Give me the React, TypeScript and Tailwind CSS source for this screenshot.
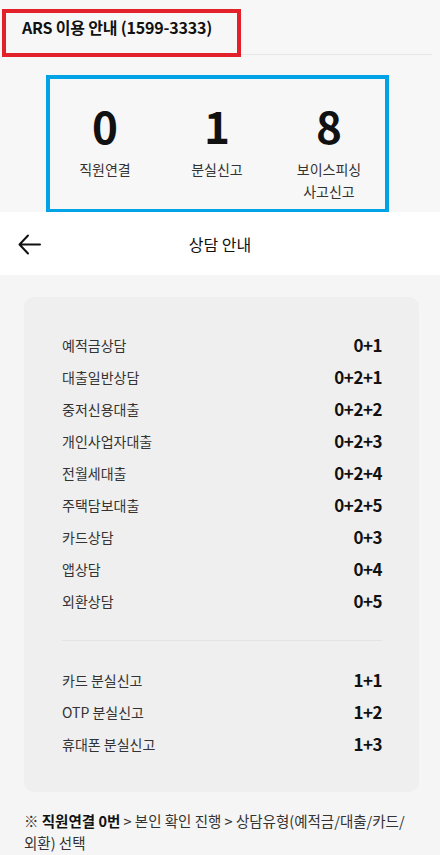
const consultRows = [
  { label: "예적금상담", code: "0+1" },
  { label: "대출일반상담", code: "0+2+1" },
  { label: "중저신용대출", code: "0+2+2" },
  { label: "개인사업자대출", code: "0+2+3" },
  { label: "전월세대출", code: "0+2+4" },
  { label: "주택담보대출", code: "0+2+5" },
  { label: "카드상담", code: "0+3" },
  { label: "앱상담", code: "0+4" },
  { label: "외환상담", code: "0+5" },
];

const lossRows = [
  { label: "카드 분실신고", code: "1+1" },
  { label: "OTP 분실신고", code: "1+2" },
  { label: "휴대폰 분실신고", code: "1+3" },
];

const shortcuts = [
  { num: "0", label: ["직원연결"] },
  { num: "1", label: ["분실신고"] },
  { num: "8", label: ["보이스피싱", "사고신고"] },
];

const Row = ({ label, code }: { label: string; code: string }) => (
  <div className="flex h-8 items-center justify-between">
    <span className="text-[14px] text-[#333]">{label}</span>
    <span className="text-[17px] font-bold tracking-[-0.5px] text-[#111]">{code}</span>
  </div>
);

export default function App() {
  return (
    <div
      className="w-[440px] min-h-[855px] bg-[#f5f5f5] text-[#222]"
      style={{ fontFamily: '"Noto Sans CJK KR", "Noto Sans", sans-serif' }}
    >
      {/* ARS summary */}
      <div className="relative h-[212px] bg-[#f7f7f7]">
        <div className="mx-2 flex h-[55px] items-center border-b border-[#e6e6e6] pl-[14px]">
          <h1 className="text-[16px] font-bold tracking-[-0.2px] text-[#111]">ARS 이용 안내 (1599-3333)</h1>
        </div>
        <div className="mx-auto mt-[45px] grid w-[336px] grid-cols-3 -translate-x-[3px]">
          {shortcuts.map((s) => (
            <div key={s.num} className="flex flex-col items-center">
              <span className="text-[44px] font-bold leading-[50px] text-[#111]">{s.num}</span>
              <div className="mt-[8px] flex flex-col items-center text-[14px] leading-[22px] text-[#333]">
                {s.label.map((l) => (
                  <span key={l}>{l}</span>
                ))}
              </div>
            </div>
          ))}
        </div>

        {/* annotation boxes */}
        <div className="absolute left-[2px] top-[9px] h-[48px] w-[239px] border-4 border-[#e3212b]" />
        <div className="absolute left-[46px] top-[75px] h-[138px] w-[343px] border-4 border-[#00a3e6]" />
      </div>

      {/* Sub header */}
      <div className="relative flex h-[63px] items-center justify-center bg-white">
        <svg
          className="absolute left-[18px] top-[22px]"
          width="23"
          height="21"
          viewBox="0 0 23 21"
          fill="none"
          stroke="#111"
          strokeWidth="2"
          strokeLinecap="round"
          strokeLinejoin="round"
        >
          <path d="M10 1.5 1.5 10.5 10 19.5M1.5 10.5H22" />
        </svg>
        <span className="text-[16px] text-[#111]">상담 안내</span>
      </div>

      {/* Codes */}
      <div className="pl-6 pr-[21px] pt-[22px]">
        <div className="rounded-[10px] bg-[#efefef] pl-[38px] pr-[37px] py-[32px]">
          {consultRows.map((r) => (
            <Row key={r.label} {...r} />
          ))}
          <div className="my-[23px] h-px bg-[#e3e3e3]" />
          {lossRows.map((r) => (
            <Row key={r.label} {...r} />
          ))}
        </div>
        <p className="mt-[18px] break-keep text-[14.5px] leading-[22px] text-[#333]">
          ※ <b className="font-bold text-[#111]">직원연결 0번</b> &gt; 본인 확인 진행 &gt; 상담유형(예적금/대출/카드/<wbr />외환) 선택
        </p>
      </div>
    </div>
  );
}
